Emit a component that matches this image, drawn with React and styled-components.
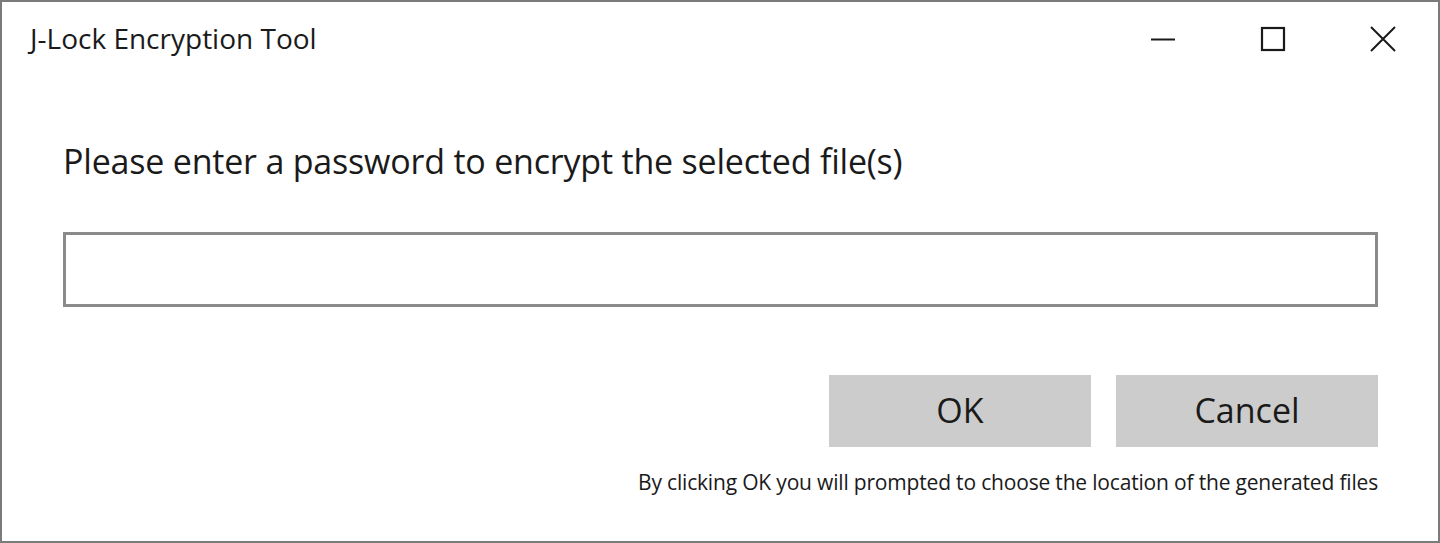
import React, { useState } from 'react';
import styled, { createGlobalStyle } from 'styled-components';

const GlobalStyle = createGlobalStyle`
  html, body {
    margin: 0;
    padding: 0;
    background: #ffffff;
  }
  * {
    box-sizing: border-box;
  }
`;

const Window = styled.div`
  width: 1440px;
  height: 543px;
  border: 2px solid #7b7b7b;
  background: #ffffff;
  display: flex;
  flex-direction: column;
  font-family: 'Open Sans', 'Noto Sans', sans-serif;
  color: #1a1a1a;
`;

const TitleBar = styled.div`
  height: 76px;
  display: flex;
  align-items: center;
  padding-left: 28px;
`;

const Title = styled.div`
  flex: 1;
  font-size: 28px;
  line-height: 32px;
  letter-spacing: 0;
  padding-bottom: 4px;
`;

const Controls = styled.div`
  display: flex;
  align-items: center;
  height: 100%;
`;

const ControlButton = styled.button`
  width: 110px;
  height: 76px;
  border: none;
  background: transparent;
  display: flex;
  align-items: center;
  justify-content: center;
  padding: 0 0 2px;
  cursor: default;
`;

const Body = styled.div`
  flex: 1;
  padding: 63px 60px 0 61px;
  display: flex;
  flex-direction: column;
`;

const Prompt = styled.div`
  font-size: 34px;
  letter-spacing: -0.2px;
  line-height: 40px;
`;

const PasswordInput = styled.input`
  margin-top: 51px;
  width: 100%;
  height: 75px;
  border: 3px solid #8a8a8a;
  outline: none;
  font-size: 26px;
  padding: 0 12px;
  font-family: inherit;
`;

const ButtonRow = styled.div`
  margin-top: 68px;
  display: flex;
  justify-content: flex-end;
  gap: 25px;
`;

const DialogButton = styled.button`
  width: 262px;
  height: 72px;
  border: none;
  background: #cccccc;
  font-family: inherit;
  font-size: 34px;
  color: #1a1a1a;
  padding: 0 0 2px;
  cursor: default;
`;

const Note = styled.div`
  margin-top: 22px;
  text-align: right;
  font-size: 21px;
  line-height: 26px;
  letter-spacing: -0.18px;
  color: #1a1a1a;
`;

export default function App() {
  const [password, setPassword] = useState('');

  return (
    <>
      <GlobalStyle />
      <Window>
        <TitleBar>
          <Title>J-Lock Encryption Tool</Title>
          <Controls>
            <ControlButton aria-label="Minimize">
              <svg width="26" height="26" viewBox="0 0 26 26">
                <line x1="1" y1="13.5" x2="25" y2="13.5" stroke="#1a1a1a" strokeWidth="2" />
              </svg>
            </ControlButton>
            <ControlButton aria-label="Maximize">
              <svg width="26" height="26" viewBox="0 0 26 26">
                <rect x="2" y="2" width="22" height="22" fill="none" stroke="#1a1a1a" strokeWidth="2.2" />
              </svg>
            </ControlButton>
            <ControlButton aria-label="Close">
              <svg width="28" height="28" viewBox="0 0 28 28">
                <path d="M2 2 L26 26 M26 2 L2 26" stroke="#1a1a1a" strokeWidth="2" />
              </svg>
            </ControlButton>
          </Controls>
        </TitleBar>
        <Body>
          <Prompt>Please enter a password to encrypt the selected file(s)</Prompt>
          <PasswordInput
            type="password"
            value={password}
            onChange={(e) => setPassword(e.target.value)}
          />
          <ButtonRow>
            <DialogButton>OK</DialogButton>
            <DialogButton>Cancel</DialogButton>
          </ButtonRow>
          <Note>By clicking OK you will prompted to choose the location of the generated files</Note>
        </Body>
      </Window>
    </>
  );
}
